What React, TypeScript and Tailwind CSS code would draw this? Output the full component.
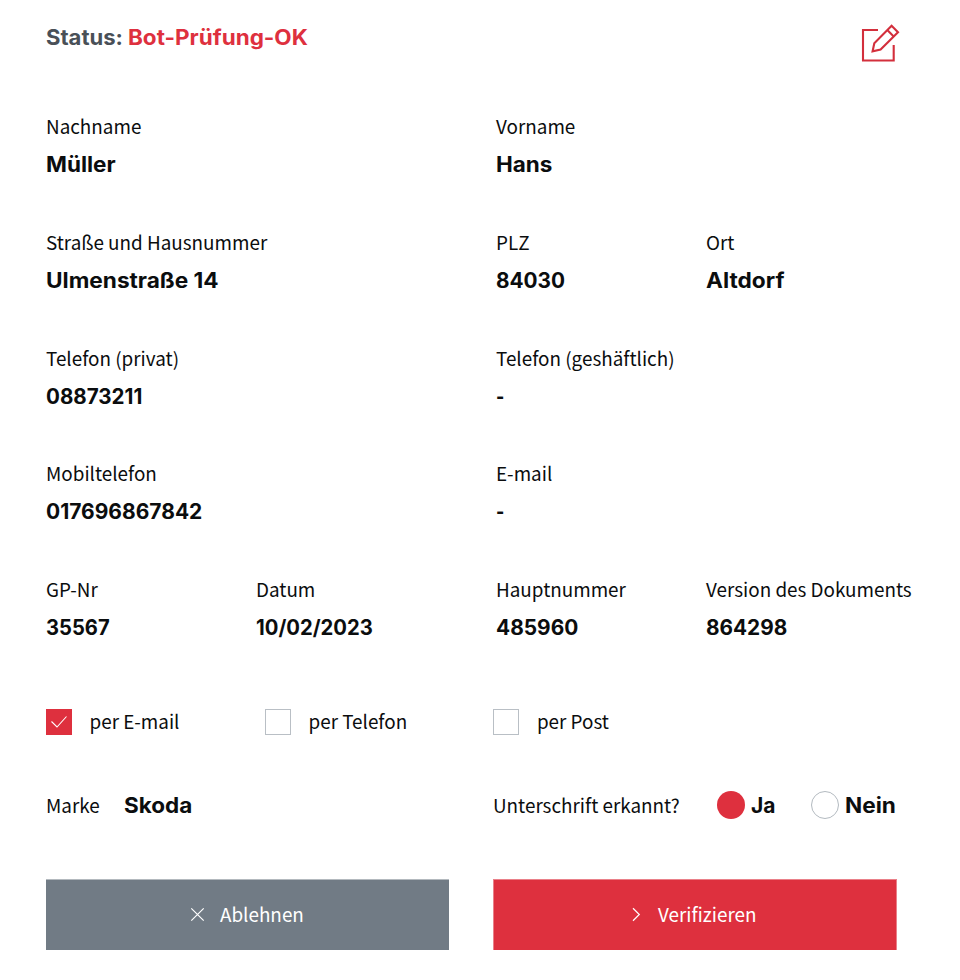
import type { ReactNode } from 'react';

const labelText = 'font-["Noto_Sans_CJK_SC",sans-serif] text-[18.86px] whitespace-nowrap';
const valueText = 'font-["Inter",sans-serif] text-[21px] font-bold whitespace-nowrap';

type FieldProps = { label: string; value: string; stretch: string; width: string };

function Field({ label, value, stretch, width }: FieldProps) {
  return (
    <div className={`${width} shrink-0`}>
      <div className={`${labelText} h-[37px] leading-[35px]`}>{label}</div>
      <div className={`${valueText} ${stretch} h-[37px] origin-left leading-[39px]`}>{value}</div>
    </div>
  );
}

const wide = 'w-[450px]';
const left = 'w-[210px]';
const middle = 'w-[240px]';

const rows: FieldProps[][] = [
  [
    { label: 'Nachname', value: 'Müller', stretch: 'scale-x-[1.07]', width: wide },
    { label: 'Vorname', value: 'Hans', stretch: 'scale-x-[1.07]', width: left },
  ],
  [
    { label: 'Straße und Hausnummer', value: 'Ulmenstraße 14', stretch: 'scale-x-[1.077]', width: wide },
    { label: 'PLZ', value: '84030', stretch: 'scale-x-[0.99]', width: left },
    { label: 'Ort', value: 'Altdorf', stretch: 'scale-x-[1.08]', width: left },
  ],
  [
    { label: 'Telefon (privat)', value: '08873211', stretch: 'scale-x-[0.98]', width: wide },
    { label: 'Telefon (geshäftlich)', value: '-', stretch: 'scale-x-[0.85]', width: left },
  ],
  [
    { label: 'Mobiltelefon', value: '017696867842', stretch: 'scale-x-[1]', width: wide },
    { label: 'E-mail', value: '-', stretch: 'scale-x-[0.85]', width: left },
  ],
  [
    { label: 'GP-Nr', value: '35567', stretch: 'scale-x-[0.96]', width: left },
    { label: 'Datum', value: '10/02/2023', stretch: 'scale-x-[0.965]', width: middle },
    { label: 'Hauptnummer', value: '485960', stretch: 'scale-x-[0.995]', width: left },
    { label: 'Version des Dokuments', value: '864298', stretch: 'scale-x-[0.99]', width: left },
  ],
];

type CheckProps = { text: string; checked?: boolean; width: string };

function Check({ text, checked, width }: CheckProps) {
  return (
    <div className={`${width} flex items-center gap-[17.5px]`}>
      {checked ? (
        <span className="flex size-[26px] items-center justify-center bg-[#de303e]">
          <svg width="26" height="26" viewBox="0 0 26 26" fill="none" stroke="white" strokeWidth="1.1">
            <path d="M5.5 12.5 L11 18 L20.5 7.5" />
          </svg>
        </span>
      ) : (
        <span className="size-[26px] border border-[#b9bfc5]" />
      )}
      <span className={`${labelText} pb-[1px]`}>{text}</span>
    </div>
  );
}

function ActionButton({ color, gap, children }: { color: string; gap: string; children: ReactNode }) {
  return (
    <button className={`${color} ${gap} ${labelText} flex h-[71px] items-center border-t text-white`}>
      {children}
    </button>
  );
}

export default function App() {
  return (
    <div className="h-[980px] w-[960px] overflow-hidden bg-white pl-[46px] text-[#0b0d0e]">
      <header className="flex h-[108px] w-[854px] items-start justify-between">
        <div className={`${valueText} flex pt-[19px] leading-[37px]`}>
          <span className="w-[82px] origin-left scale-x-[1.05] text-[#495057]">Status:</span>
          <span className="origin-left scale-x-[1.07] text-[#de303e]">Bot-Prüfung-OK</span>
        </div>
        <svg className="mt-[24px]" width="40" height="40" viewBox="860 24 40 40" fill="none" stroke="#d32f3c" strokeWidth="2.1">
          <path d="M878 30 H863 V60.5 H893.7 V45" />
          <path d="M872.6 51.3 L874.3 43.2 L891.6 25.8 L898 32.2 L880.6 49.6 Z" />
          <path d="M887.3 30.1 L893.7 36.5" />
        </svg>
      </header>

      <div className="flex flex-col gap-[41.8px]">
        {rows.map((row, i) => (
          <div key={i} className="flex">
            {row.map((field) => (
              <Field key={field.label} {...field} />
            ))}
          </div>
        ))}
      </div>

      <div className="mt-[61.8px] flex h-[30px] items-center">
        <Check text="per E-mail" checked width="w-[219px]" />
        <Check text="per Telefon" width="w-[228.4px]" />
        <Check text="per Post" width="w-[200px]" />
      </div>

      <div className="mt-[36px] flex h-[64px] items-center">
        <div className="flex w-[447px] items-center">
          <span className={`${labelText} w-[78px]`}>Marke</span>
          <span className={`${valueText} origin-left scale-x-[1.07] pt-[2px]`}>Skoda</span>
        </div>
        <div className="flex items-center">
          <span className={`${labelText} w-[224px]`}>Unterschrift erkannt?</span>
          <span className="size-[28px] rounded-full bg-[#de303e]" />
          <span className={`${valueText} ml-[6px] w-[60px] origin-left pt-[2px]`}>Ja</span>
          <span className="size-[28px] rounded-full border border-[#b3bac0]" />
          <span className={`${valueText} ml-[6px] origin-left scale-x-[1.075] pt-[2px]`}>Nein</span>
        </div>
      </div>

      <div className="mt-[42px] flex gap-[44px]">
        <ActionButton color="w-[403px] border-[#b3b9be] bg-[#717b85]" gap="gap-[15px] pl-[144px]">
          <svg width="15" height="15" viewBox="0 0 15 15" fill="none" stroke="white" strokeWidth="1.2">
            <path d="M1.3 1.3 L13.7 13.7 M13.7 1.3 L1.3 13.7" />
          </svg>
          <span className="pb-[1px]">Ablehnen</span>
        </ActionButton>
        <ActionButton color="w-[404px] border-x border-[#ea8089] bg-[#de303e]" gap="gap-[17px] pl-[137px]">
          <svg width="10" height="15" viewBox="0 0 10 15" fill="none" stroke="white" strokeWidth="1.2">
            <path d="M2 1.3 L8.3 7.5 L2 13.7" />
          </svg>
          <span className="pb-[1px]">Verifizieren</span>
        </ActionButton>
      </div>
    </div>
  );
}
